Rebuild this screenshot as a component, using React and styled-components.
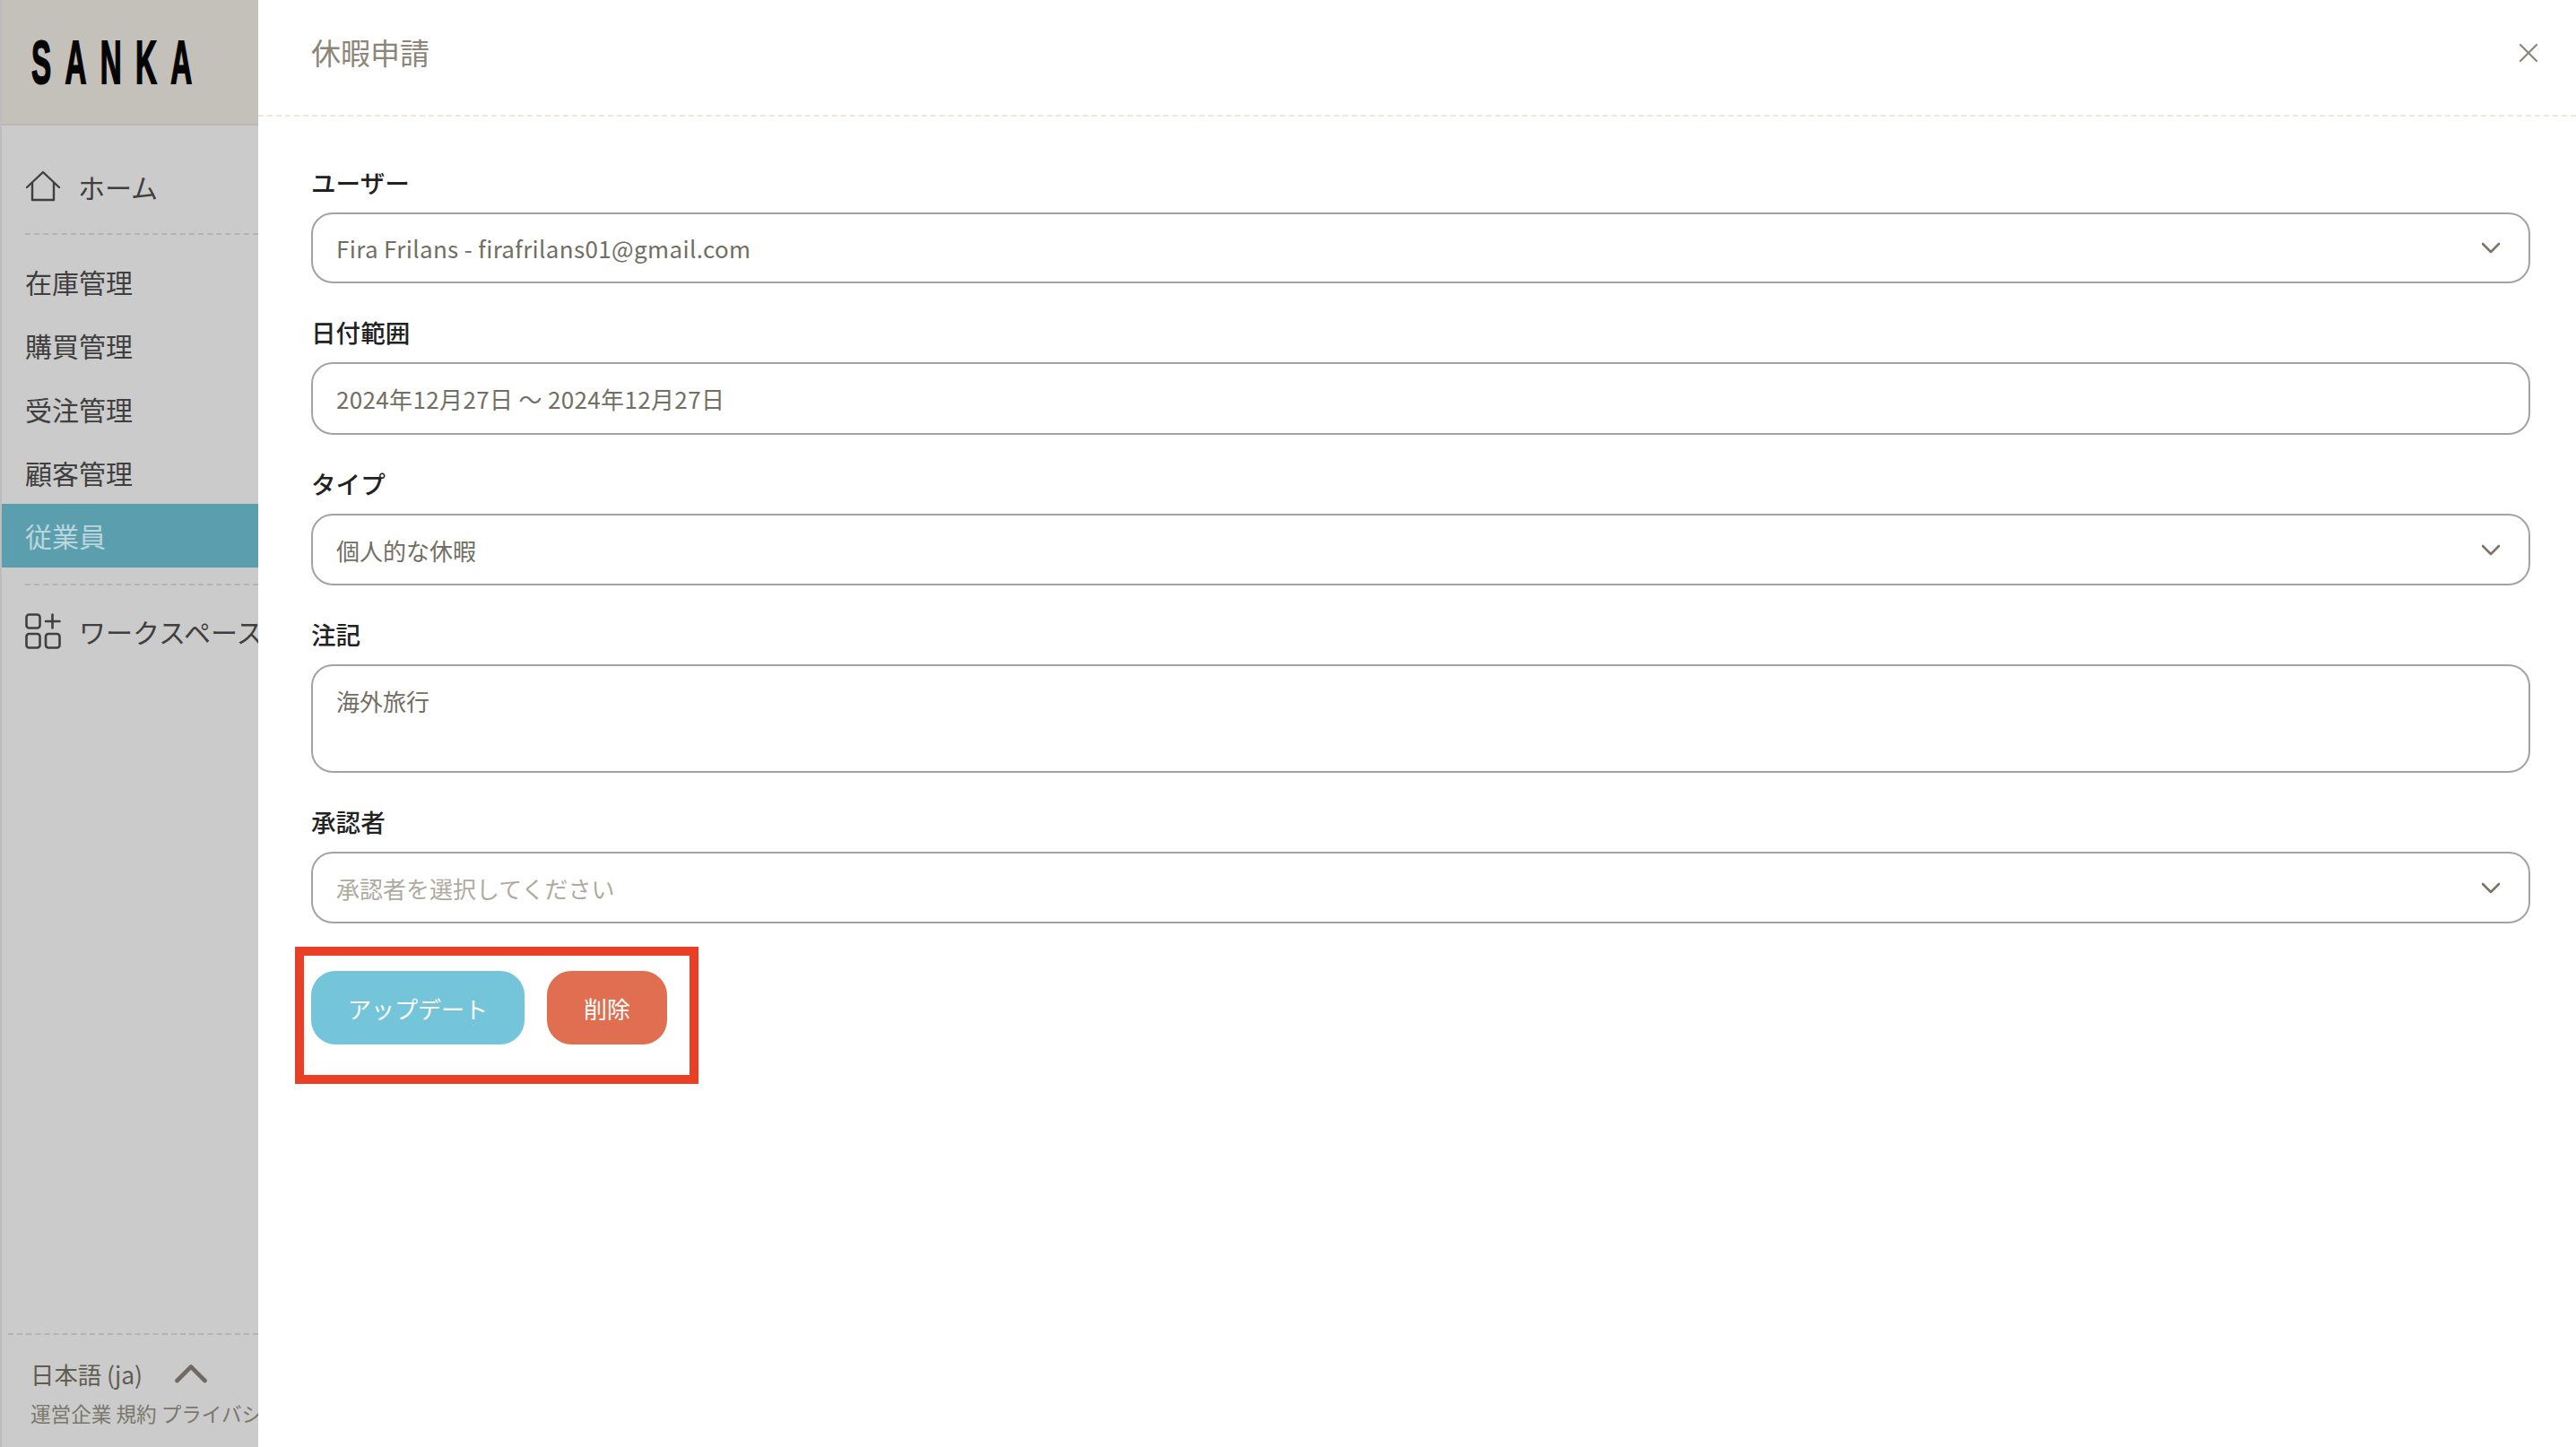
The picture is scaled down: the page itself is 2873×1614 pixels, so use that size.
import styled, { createGlobalStyle } from "styled-components";

const GlobalStyle = createGlobalStyle`
  html, body {
    margin: 0;
    padding: 0;
    background: #fff;
  }
  body {
    font-family: "Noto Sans CJK JP", "Noto Sans", sans-serif;
  }
  * {
    box-sizing: border-box;
  }
`;

const Chevron = () => (
  <svg width='20' height='13' viewBox='0 0 20 13' fill='none'>
    <path
      d='M1 2 L10 11 L19 2'
      stroke='#7d7668'
      strokeWidth='2.6'
      strokeLinecap='round'
      strokeLinejoin='round'
    />
  </svg>
);

const Field = ({ label, value, placeholder, select, tracked, height }) => (
  <Group>
    <Label>{label}</Label>
    <Control $height={height}>
      <Value $muted={placeholder} $tracked={tracked}>
        {value}
      </Value>
      {select && <Chevron />}
    </Control>
  </Group>
);

const menu = ["在庫管理", "購買管理", "受注管理", "顧客管理", "従業員"];

const App = () => {
  return (
    <Page>
      <GlobalStyle />
      <Sidebar>
        <Brand>
          <Logo>SANKA</Logo>
        </Brand>
        <IconRow $top='48px' $gap='19px'>
          <svg width='40' height='36' viewBox='0 0 40 36' fill='none'>
            <path
              d='M2 19 L20 2 L38 19 M8 14 V33 H32 V14'
              stroke='#3f3f3f'
              strokeWidth='2.4'
              strokeLinejoin='round'
              strokeLinecap='round'
            />
          </svg>
          <span>ホーム</span>
        </IconRow>
        <Dash $top='32px' />
        <Menu>
          {menu.map((item) => (
            <MenuItem key={item} $active={item === "従業員"}>
              {item}
            </MenuItem>
          ))}
        </Menu>
        <Dash $top='18px' />
        <IconRow $top='31px' $gap='20px'>
          <svg width='40' height='40' viewBox='0 0 40 40' fill='none'>
            <g stroke='#3f3f3f' strokeWidth='2.6' strokeLinecap='round'>
              <rect x='1.5' y='1.5' width='15' height='15' rx='3' />
              <rect x='1.5' y='23' width='15' height='15.5' rx='3' />
              <rect x='23' y='23' width='15.5' height='15.5' rx='3' />
              <path d='M30.5 1.5 V16.5 M23 9 H38.5' />
            </g>
          </svg>
          <span>ワークスペース</span>
        </IconRow>
        <Footer>
          <Language>
            <span>日本語 (ja)</span>
            <svg width='36' height='22' viewBox='0 0 36 22' fill='none'>
              <path
                d='M2.5 19 L18 3.5 L33.5 19'
                stroke='#6f6b60'
                strokeWidth='4.6'
                strokeLinecap='round'
                strokeLinejoin='round'
              />
            </svg>
          </Language>
          <Links>運営企業 規約 プライバシーポリシー</Links>
        </Footer>
      </Sidebar>
      <Main>
        <Header>
          <Title>休暇申請</Title>
          <svg width='22' height='22' viewBox='0 0 22 22' fill='none'>
            <path
              d='M2 2 L20 20 M20 2 L2 20'
              stroke='#8c8678'
              strokeWidth='2.2'
              strokeLinecap='round'
            />
          </svg>
        </Header>
        <Form>
          <Field
            label='ユーザー'
            value='Fira Frilans - firafrilans01@gmail.com'
            height='79px'
            tracked
            select
          />
          <Field
            label='日付範囲'
            value='2024年12月27日 〜 2024年12月27日'
            height='81px'
            tracked
          />
          <Field label='タイプ' value='個人的な休暇' height='80px' select />
          <Group>
            <Label>注記</Label>
            <Note>海外旅行</Note>
          </Group>
          <Field
            label='承認者'
            value='承認者を選択してください'
            height='80px'
            placeholder
            select
          />
          <Actions>
            <Highlight />
            <Button $color='#74c5d9' $width='238px'>
              アップデート
            </Button>
            <Button $color='#e06f52' $width='134px'>
              削除
            </Button>
          </Actions>
        </Form>
      </Main>
    </Page>
  );
};

const Page = styled.div`
  display: flex;
  width: 2873px;
  height: 1614px;
  overflow: hidden;
  background: #fff;
`;

const Sidebar = styled.aside`
  display: flex;
  flex-direction: column;
  flex: 0 0 288px;
  width: 288px;
  height: 100%;
  overflow: hidden;
  background: #cbcbcb;
  border-left: 2px solid #bdbdbd;
  color: #3f3f3f;
`;

const Brand = styled.div`
  flex: 0 0 140px;
  display: flex;
  align-items: center;
  padding-left: 33px;
  background: #c4c1ba;
  border-bottom: 2px solid #bbb8b2;
`;

const Logo = styled.div`
  font-family: "Liberation Sans", sans-serif;
  font-size: 69px;
  font-weight: 700;
  line-height: 1;
  letter-spacing: 32px;
  color: #050505;
  -webkit-text-stroke: 2px #050505;
  transform: scaleX(0.48);
  transform-origin: left center;
`;

const IconRow = styled.div`
  display: flex;
  align-items: center;
  gap: ${({ $gap }) => $gap};
  height: 40px;
  margin-top: ${({ $top }) => $top};
  padding-left: 26px;
  font-size: 30px;
  white-space: nowrap;
  svg {
    flex: none;
  }
`;

const Dash = styled.div`
  flex: none;
  margin: ${({ $top }) => $top} 0 0 26px;
  border-top: 2px dashed #b3b3b3;
`;

const Menu = styled.nav`
  display: flex;
  flex-direction: column;
  margin-top: 17px;
`;

const MenuItem = styled.div`
  display: flex;
  align-items: center;
  height: 70.75px;
  padding-left: 26px;
  font-size: 30px;
  background: ${({ $active }) => ($active ? "#5b9fae" : "transparent")};
  color: ${({ $active }) => ($active ? "#b9d6dc" : "#3f3f3f")};
`;

const Footer = styled.div`
  margin-top: auto;
  margin-left: 7px;
  height: 127px;
  padding: 23px 0 0 25px;
  border-top: 2px dashed #b3b3b3;
`;

const Language = styled.div`
  display: flex;
  align-items: center;
  gap: 36px;
  height: 40px;
  font-size: 26.4px;
  color: #5f5c52;
  white-space: nowrap;
`;

const Links = styled.div`
  margin-top: 9px;
  font-size: 22.6px;
  line-height: 32px;
  color: #7b776b;
  white-space: nowrap;
`;

const Main = styled.main`
  flex: 1;
  min-width: 0;
`;

const Header = styled.header`
  display: flex;
  align-items: center;
  justify-content: space-between;
  height: 130px;
  padding: 0 42px 10px 59px;
  border-bottom: 2px dashed #ece8df;
`;

const Title = styled.h1`
  margin: 0 0 2px;
  font-size: 33px;
  font-weight: 400;
  color: #8c8678;
`;

const Form = styled.form`
  display: flex;
  flex-direction: column;
  gap: 34px;
  padding: 53px 51px 0 59px;
`;

const Group = styled.div`
  display: flex;
  flex-direction: column;
  gap: 14px;
`;

const Label = styled.label`
  font-size: 27.6px;
  line-height: 40px;
  font-weight: 500;
  color: #222;
`;

const Control = styled.div`
  display: flex;
  align-items: center;
  justify-content: space-between;
  height: ${({ $height }) => $height};
  padding: 0 32px 0 26px;
  border: 2px solid #a3a3a3;
  border-radius: 24px;
`;

const Value = styled.span`
  font-size: 26px;
  letter-spacing: ${({ $tracked }) => ($tracked ? "0.35px" : "0")};
  color: ${({ $muted }) => ($muted ? "#b0ab9f" : "#726e63")};
`;

const Note = styled.div`
  height: 121px;
  padding: 23px 26px;
  font-size: 26px;
  line-height: 32px;
  color: #726e63;
  border: 2px solid #a3a3a3;
  border-radius: 24px;
`;

const Actions = styled.div`
  position: relative;
  display: flex;
  gap: 25px;
  margin-top: 19px;
`;

const Highlight = styled.div`
  position: absolute;
  left: -18px;
  top: -27px;
  width: 450px;
  height: 153px;
  border: 10px solid #ea3f24;
  pointer-events: none;
`;

const Button = styled.button`
  width: ${({ $width }) => $width};
  height: 82px;
  padding: 0;
  border: none;
  border-radius: 27px;
  font-family: inherit;
  font-size: 26px;
  color: #fff;
  background: ${({ $color }) => $color};
`;

export default App;
